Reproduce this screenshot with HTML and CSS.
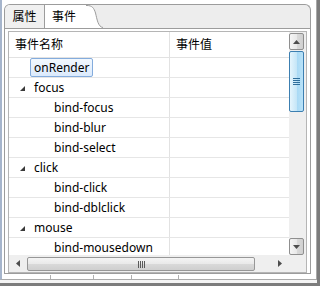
FILE: index.html
```html
<!DOCTYPE html>
<html lang="zh-CN">
<head>
    <meta charset="UTF-8">
    <title>事件</title>
    <link rel="stylesheet" href="styles.css">
</head>
<body>
<div class="window">
    <div class="frame">
        <div class="folder">
            <div class="tabbar">
                <div class="tab">属性</div>
                <div class="tab active">事件</div>
                <svg class="tab-curve" width="17" height="23" viewBox="0 0 17 23">
                    <path d="M0 0 H1 C6 0 8 3 9.5 8 C11 14 12 22 17 22.5 V23 H0 Z" fill="#fff"/>
                    <path d="M0 0.5 H1 C6 0.5 8 3 9.5 8 C11 14 12 22 17 22.5" fill="none" stroke="#9c9c9c"/>
                </svg>
            </div>
            <div class="panel">
                <div class="table">
                    <div class="view">
                        <div class="row head">
                            <div class="cell name">事件名称</div>
                            <div class="cell">事件值</div>
                        </div>
                        <div class="row">
                            <div class="cell name top"><span class="selected">onRender</span></div>
                            <div class="cell"></div>
                        </div>
                        <div class="row">
                            <div class="cell name group"><svg class="twisty" width="6" height="6" viewBox="0 0 6 6"><path d="M5 0 V5 H0 Z" fill="#3a3a3a"/></svg>focus</div>
                            <div class="cell"></div>
                        </div>
                        <div class="row">
                            <div class="cell name child">bind-focus</div>
                            <div class="cell"></div>
                        </div>
                        <div class="row">
                            <div class="cell name child">bind-blur</div>
                            <div class="cell"></div>
                        </div>
                        <div class="row">
                            <div class="cell name child">bind-select</div>
                            <div class="cell"></div>
                        </div>
                        <div class="row">
                            <div class="cell name group"><svg class="twisty" width="6" height="6" viewBox="0 0 6 6"><path d="M5 0 V5 H0 Z" fill="#3a3a3a"/></svg>click</div>
                            <div class="cell"></div>
                        </div>
                        <div class="row">
                            <div class="cell name child">bind-click</div>
                            <div class="cell"></div>
                        </div>
                        <div class="row">
                            <div class="cell name child">bind-dblclick</div>
                            <div class="cell"></div>
                        </div>
                        <div class="row">
                            <div class="cell name group"><svg class="twisty" width="6" height="6" viewBox="0 0 6 6"><path d="M5 0 V5 H0 Z" fill="#3a3a3a"/></svg>mouse</div>
                            <div class="cell"></div>
                        </div>
                        <div class="row">
                            <div class="cell name child">bind-mousedown</div>
                            <div class="cell"></div>
                        </div>
                    </div>
                    <div class="vscroll">
                        <div class="sb-btn">
                            <svg width="7" height="4" viewBox="0 0 7 4"><path d="M3.5 0 L7 4 H0 Z" fill="#4d4d4d"/></svg>
                        </div>
                        <div class="vthumb">
                            <div class="grip-v"></div>
                        </div>
                        <div class="sb-fill"></div>
                        <div class="sb-btn">
                            <svg width="7" height="4" viewBox="0 0 7 4"><path d="M0 0 H7 L3.5 4 Z" fill="#4d4d4d"/></svg>
                        </div>
                    </div>
                    <div class="hscroll">
                        <div class="sb-arrow">
                            <svg width="4" height="7" viewBox="0 0 4 7"><path d="M4 0 V7 L0 3.5 Z" fill="#4d4d4d"/></svg>
                        </div>
                        <div class="hthumb">
                            <div class="grip-h"></div>
                        </div>
                        <div class="sb-fill"></div>
                        <div class="sb-arrow">
                            <svg width="4" height="7" viewBox="0 0 4 7"><path d="M0 0 L4 3.5 L0 7 Z" fill="#4d4d4d"/></svg>
                        </div>
                    </div>
                    <div class="corner"></div>
                </div>
            </div>
        </div>
        <div class="status">
            <div class="status-cell first"></div>
            <div class="status-cell w42"></div>
            <div class="status-cell w37"></div>
            <div class="status-cell w46"></div>
            <div class="status-cell rest"></div>
        </div>
    </div>
</div>
</body>
</html>
```

FILE: styles.css
```css
body {
    margin: 0;
    font-family: "Noto Sans", "Noto Sans CJK SC", sans-serif;
    font-size: 12px;
    color: #000;
}

.window {
    width: 320px;
    height: 286px;
    box-sizing: border-box;
    border-right: 3px solid #7c7c7c;
    border-bottom: 3px solid #7c7c7c;
    background: #f4f4f4;
}

.frame {
    height: 280px;
    box-sizing: border-box;
    border-left: 2px solid #a6b5cc;
    border-right: 1px solid #a9a9a9;
    border-bottom: 1px solid #a9a9a9;
    background: #fff;
    padding: 4px 0 0 2px;
}

.folder {
    width: 307px;
    height: 270px;
    display: flex;
    flex-direction: column;
}

/* tabs */
.tabbar {
    height: 23px;
    display: flex;
    border: 1px solid #9c9c9c;
    border-bottom: none;
    border-radius: 6px 6px 0 0;
    background: #ededed;
    overflow: hidden;
}

.tab {
    width: 39px;
    line-height: 23px;
    text-align: center;
    background: #f0f0f0;
    border-right: 1px solid #9c9c9c;
}

.tab.active {
    width: 34px;
    padding-left: 7px;
    text-align: left;
    background: #fff;
    border-right: none;
}

.tab-curve {
    display: block;
}

.panel {
    flex: 1;
    border: 1px solid #9c9c9c;
    padding: 2px 3px 0 3px;
    background: #fff;
}

/* table */
.table {
    height: 242px;
    box-sizing: border-box;
    border: 1px solid #b5b5b5;
    display: grid;
    grid-template-columns: 1fr 17px;
    grid-template-rows: 1fr 17px;
}

.view {
    overflow: hidden;
}

.row {
    display: grid;
    grid-template-columns: 161px 1fr;
    height: 19px;
    border-bottom: 1px solid #e6e6e6;
}

.row.head {
    height: 25px;
    border-bottom-color: #e2e2e2;
}

.cell {
    white-space: nowrap;
    line-height: 19px;
    padding-left: 6px;
}

.row.head .cell {
    line-height: 25px;
}

.cell.name {
    border-right: 1px solid #e2e2e2;
}

.cell.top {
    padding-left: 21px;
}

.cell.group {
    padding-left: 11px;
}

.cell.child {
    padding-left: 45px;
}

.twisty {
    margin-right: 8px;
    vertical-align: 0;
}

.selected {
    display: inline-block;
    line-height: 17px;
    padding: 0 3px;
    border: 1px solid #84acdd;
    border-radius: 2px;
    background: linear-gradient(#f2f8fe, #dbeafc);
}

/* scrollbars */
.vscroll {
    display: flex;
    flex-direction: column;
    background: #efefef;
}

.sb-btn {
    height: 15px;
    margin: 1px 2px 0 0;
    border: 1px solid #8f8f8f;
    border-radius: 2px;
    background: linear-gradient(to right, #f5f5f5, #e9e9e9 50%, #dadada 51%, #d0d0d0);
    display: flex;
    align-items: center;
    justify-content: center;
}

.sb-btn:last-child {
    margin: 0 2px 0 0;
}

.vthumb {
    height: 59px;
    margin: 1px 2px 0 0;
    border: 1px solid #3c7fb1;
    border-radius: 2px;
    background: linear-gradient(to right, #e5f5fd, #c6e6f7 50%, #a8d9f5 51%, #b9e2f8);
    display: flex;
    align-items: center;
    justify-content: center;
}

.grip-v {
    width: 7px;
    height: 7px;
    background: repeating-linear-gradient(#2f6e9c 0, #2f6e9c 1px, transparent 1px, transparent 2px);
}

.sb-fill {
    flex: 1;
}

.hscroll {
    display: flex;
    background: #efefef;
}

.sb-arrow {
    width: 18px;
    display: flex;
    align-items: center;
    justify-content: center;
}

.hthumb {
    width: 226px;
    height: 12px;
    margin-top: 2px;
    border: 1px solid #979797;
    border-radius: 2px;
    background: linear-gradient(#f4f4f4, #e9e9e9 50%, #d9d9d9 51%, #cfcfcf);
    display: flex;
    align-items: center;
    justify-content: center;
}

.grip-h {
    width: 7px;
    height: 7px;
    background: repeating-linear-gradient(to right, #5a5a5a 0, #5a5a5a 1px, transparent 1px, transparent 2px);
}

.corner {
    background: #efefef;
}

/* bottom strip */
.status {
    display: flex;
    height: 4px;
    margin-top: 1px;
}

.status-cell {
    border-left: 1px solid #b0b0b0;
}

.status-cell.first {
    width: 46px;
    border-left: none;
}

.w42 { width: 42px; }
.w37 { width: 37px; }
.w46 { width: 46px; }
.rest { flex: 1; }
```
